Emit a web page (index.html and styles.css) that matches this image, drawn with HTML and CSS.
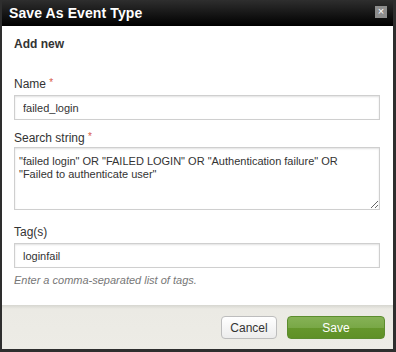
FILE: index.html
```html
<!DOCTYPE html>
<html>
<head>
<meta charset="utf-8">
<link rel="stylesheet" href="styles.css">
</head>
<body>
<div class="dialog">
  <div class="titlebar">
    <span class="title">Save As Event Type</span>
    <span class="close">×</span>
  </div>
  <div class="content">
    <h2 class="heading">Add new</h2>
    <label class="label label-first">Name <span class="req">*</span></label>
    <input class="field" type="text" value="failed_login">
    <label class="label">Search string <span class="req">*</span></label>
    <textarea class="area">"failed login" OR "FAILED LOGIN" OR "Authentication failure" OR "Failed to authenticate user"</textarea>
    <label class="label label-tags">Tag(s)</label>
    <input class="field field-tags" type="text" value="loginfail">
    <p class="help">Enter a comma-separated list of tags.</p>
  </div>
  <div class="footer">
    <button class="btn btn-cancel">Cancel</button>
    <button class="btn btn-save">Save</button>
  </div>
</div>
</body>
</html>
```
FILE: styles.css
```css
* { box-sizing: border-box; }
html, body {
  margin: 0;
  padding: 0;
  background: #2b2b2b;
}
body {
  width: 396px;
  height: 352px;
  font-family: "Liberation Sans", Arial, sans-serif;
  color: #333;
}
.dialog {
  width: 396px;
  height: 352px;
  border-left: 2px solid #2e2e2e;
  border-right: 3px solid #2e2e2e;
  border-bottom: 3px solid #2e2e2e;
  display: flex;
  flex-direction: column;
}
.titlebar {
  height: 26px;
  flex: none;
  background: linear-gradient(#2e2e2e, #000);
  display: flex;
  align-items: center;
  justify-content: space-between;
  padding: 0 6px 0 7px;
}
.title {
  color: #fff;
  font-weight: bold;
  font-size: 14px;
  letter-spacing: 0.1px;
}
.close {
  width: 12px;
  height: 12px;
  background: #8d8d8d;
  color: #fff;
  font-size: 11px;
  line-height: 11px;
  text-align: center;
  margin-top: -2px;
}
.content {
  flex: 1;
  background: #fff;
  padding: 10px 13px 0 12px;
  display: flex;
  flex-direction: column;
}
.heading {
  margin: 0;
  font-size: 12px;
  line-height: 16px;
  font-weight: bold;
  color: #333;
}
.label {
  display: block;
  font-size: 12px;
  line-height: 15px;
  color: #333;
  margin-top: 11px;
}
.label-first { margin-top: 25px; }
.label-tags { margin-top: 15px; }
.req {
  color: #d85b48;
  font-size: 10px;
  position: relative;
  top: -2px;
}
.field {
  display: block;
  width: 100%;
  height: 25px;
  margin: 3px 0 0;
  border: 1px solid #cfcfcf;
  box-shadow: inset 0 1px 2px rgba(0,0,0,0.12);
  padding: 0 8px;
  font-family: "Liberation Sans", Arial, sans-serif;
  font-size: 11px;
  color: #333;
  background: #fff;
  outline: none;
}
.field-tags { margin-top: 3px; }
.area {
  display: block;
  width: 100%;
  height: 63px;
  margin: 1px 0 0;
  border: 1px solid #cfcfcf;
  box-shadow: inset 0 1px 2px rgba(0,0,0,0.12);
  padding: 7px 24px 7px 4px;
  font-family: "Liberation Sans", Arial, sans-serif;
  font-size: 11px;
  line-height: 13px;
  color: #333;
  resize: both;
  outline: none;
}
.help {
  margin: 5px 0 0;
  font-size: 11px;
  line-height: 14px;
  font-style: italic;
  color: #777;
}
.footer {
  height: 44px;
  flex: none;
  background: linear-gradient(#d6d6d0, #ebeae4 4px, #edece6);
  display: flex;
  justify-content: flex-end;
  align-items: flex-start;
  padding: 11px 8px 0 0;
  gap: 10px;
}
.btn {
  height: 23px;
  border-radius: 4px;
  font-family: "Liberation Sans", Arial, sans-serif;
  font-size: 12px;
  padding: 0;
}
.btn-cancel {
  width: 56px;
  color: #333;
  border: 1px solid #bdbdbd;
  background: linear-gradient(#ffffff, #ececec);
}
.btn-save {
  width: 98px;
  color: #fff;
  border: 1px solid #5c8d2e;
  background: linear-gradient(#86b256 0%, #79a847 50%, #65972c 52%, #5f9027 100%);
}
```
